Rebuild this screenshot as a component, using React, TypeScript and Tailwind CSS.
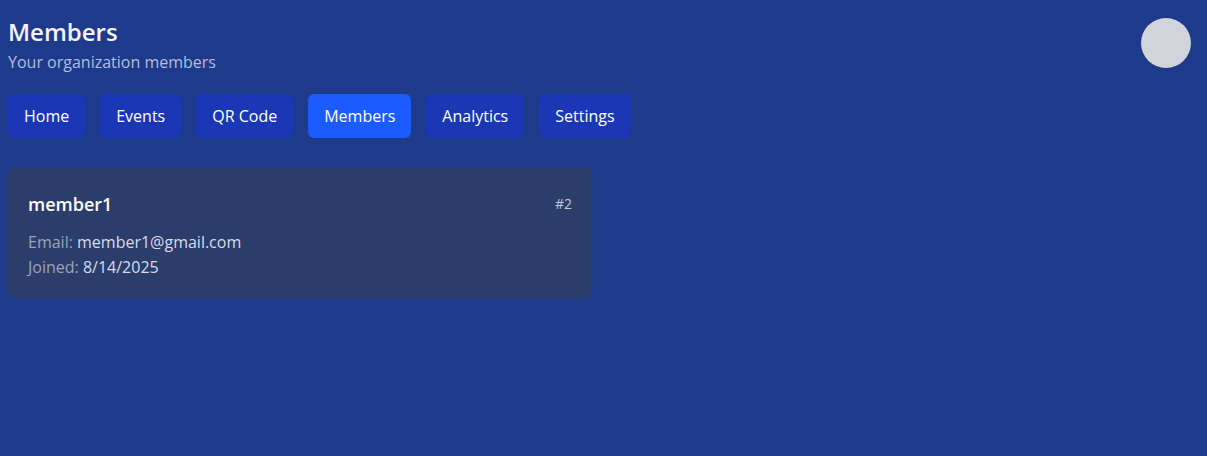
import React from 'react';

const tabs = ['Home', 'Events', 'QR Code', 'Members', 'Analytics', 'Settings'];

const App: React.FC = () => {
  return (
    <div
      className="min-h-screen w-full bg-[#1e3a8a] text-white px-2 pt-4"
      style={{ fontFamily: '"Segoe UI", "Open Sans", sans-serif' }}
    >
      {/* Header */}
      <div className="flex justify-between items-start pr-2">
        <div>
          <h1 className="text-2xl font-semibold leading-8 text-[#f3f4ff]">Members</h1>
          <p className="mt-[2px] text-base leading-6 text-[#b3bddf]">Your organization members</p>
        </div>
        <div className="w-[50px] h-[50px] rounded-full bg-[#d1d5db] mt-[2px]" />
      </div>

      {/* Nav */}
      <nav className="flex gap-[15px] mt-[20px]">
        {tabs.map((t) => (
          <button
            key={t}
            className={
              t === 'Members'
                ? 'h-[44px] px-4 rounded-md bg-[#1a5cff] text-white text-base'
                : 'h-[44px] px-4 rounded-md bg-[#1a38b6] text-white text-base'
            }
          >
            {t}
          </button>
        ))}
      </nav>

      {/* Member card */}
      <div className="mt-[30px] w-[584px] rounded-md bg-[#2b3d6b] px-5 pt-[22px] pb-[18px]">
        <div className="flex justify-between items-center">
          <h2 className="text-lg font-semibold leading-7 text-white">member1</h2>
          <span className="text-sm text-[#c4c9d6]">#2</span>
        </div>
        <div className="mt-[12px] text-base leading-[25px]">
          <div>
            <span className="text-[#9ca3b8]">Email:</span>{' '}
            <span className="text-[#d8dcea]">member1@gmail.com</span>
          </div>
          <div>
            <span className="text-[#9ca3b8]">Joined:</span>{' '}
            <span className="text-[#d8dcea]">8/14/2025</span>
          </div>
        </div>
      </div>
    </div>
  );
};

export default App;
